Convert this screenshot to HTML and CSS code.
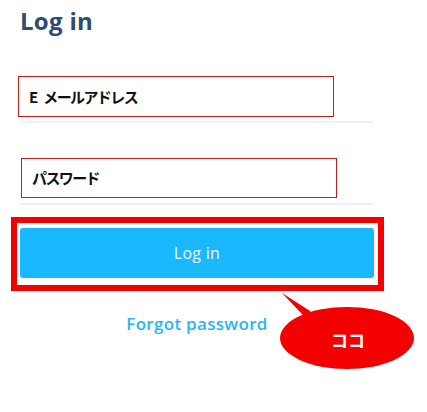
FILE: index.html
```html
<!DOCTYPE html>
<html lang="ja">

<head>
    <meta charset="UTF-8">
    <meta name="viewport" content="width=device-width, initial-scale=1.0">
    <title>Log in</title>
    <link rel="stylesheet" href="styles.css">
</head>

<body>
    <div class="page">
        <h1 class="title">Log in</h1>

        <!-- Email field -->
        <div class="field field-email">
            <div class="field-box"><span class="prefix">E</span>メールアドレス</div>
        </div>

        <!-- Password field -->
        <div class="field field-password">
            <div class="field-box">パスワード</div>
        </div>

        <!-- Highlighted login button -->
        <div class="highlight">
            <button class="login-button">Log in</button>
        </div>

        <div class="forgot-row">
            <a class="forgot" href="#">Forgot password</a>
        </div>

        <!-- Callout bubble -->
        <div class="bubble">
            <svg class="bubble-shape" width="140" height="80" viewBox="0 0 140 80">
                <path d="M2 0 L30 18 L40 40 Z" fill="#f30000" />
                <ellipse cx="67" cy="45" rx="67" ry="31" fill="#f30000" />
            </svg>
            <span class="bubble-text">ココ</span>
        </div>
    </div>
</body>

</html>
```

FILE: styles.css
```css
/* Base Styles */
body {
    margin: 0;
    padding: 0;
    background-color: #fff;
    font-family: 'Open Sans', 'Noto Sans', sans-serif;
}

.page {
    position: relative;
    width: 427px;
    height: 412px;
}

.title {
    margin: 0;
    padding: 6px 0 0 20px;
    font-size: 24px;
    line-height: 30px;
    font-weight: 700;
    letter-spacing: 0.3px;
    color: #2f4a73;
}

/* Fields */
.field {
    width: 353px;
    margin-left: 20px;
    border-bottom: 2px solid #eef0f2;
}

.field-email {
    margin-top: 40px;
    padding-bottom: 4px;
}

.field-password {
    margin-top: 35px;
    padding-bottom: 5px;
}

.field-box {
    box-sizing: border-box;
    width: 316px;
    height: 41px;
    padding-left: 10px;
    border: 1px solid #c41c1c;
    font-family: 'Noto Sans CJK JP', sans-serif;
    font-size: 15px;
    font-weight: 700;
    letter-spacing: -1.6px;
    line-height: 39px;
    color: #111;
}

.prefix {
    margin-right: 5px;
    letter-spacing: 0;
}

.field-email .field-box {
    margin-left: -2px;
}

.field-password .field-box {
    margin-left: 1px;
    height: 40px;
    line-height: 38px;
}

/* Highlighted button */
.highlight {
    box-sizing: border-box;
    width: 373px;
    height: 74px;
    margin: 12px 0 0 11px;
    padding: 5px 4px 7px 3px;
    border: 6px solid #f30000;
}

.login-button {
    display: block;
    width: 100%;
    height: 50px;
    border: none;
    border-radius: 3px;
    background-color: #1ab8ff;
    color: #eaf8ff;
    font-family: 'Open Sans', sans-serif;
    font-size: 16px;
    letter-spacing: 0.3px;
}

.forgot-row {
    width: 354px;
    margin: 21px 0 0 20px;
    text-align: center;
}

.forgot {
    font-size: 17px;
    font-weight: 600;
    color: #2bb5f0;
    text-decoration: none;
    letter-spacing: 0.3px;
}

/* Callout */
.bubble {
    position: absolute;
    left: 280px;
    top: 293px;
    width: 140px;
    height: 80px;
}

.bubble-shape {
    display: block;
}

.bubble-text {
    position: absolute;
    left: 51px;
    top: 37px;
    font-family: 'Noto Sans CJK JP', sans-serif;
    font-size: 17px;
    font-weight: 700;
    color: #fff;
    line-height: 20px;
}
```
